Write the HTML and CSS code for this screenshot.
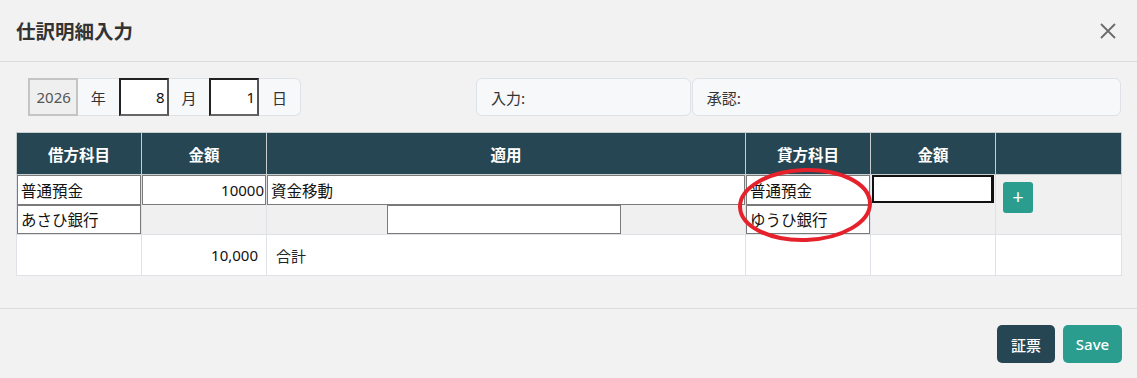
FILE: index.html
```html
<!DOCTYPE html>
<html lang="ja">
<head>
<meta charset="utf-8">
<link rel="stylesheet" href="styles.css">
</head>
<body>
<div class="modal">
  <header class="modal-header">
    <h1 class="modal-title">仕訳明細入力</h1>
    <button class="close-btn" aria-label="close">
      <svg width="18" height="18" viewBox="0 0 18 18"><path d="M2 2 L16 16 M16 2 L2 16" stroke="#6c6c6c" stroke-width="1.8" fill="none"/></svg>
    </button>
  </header>
  <div class="modal-body">
    <div class="top-row">
      <div class="date-group">
        <span class="year-box">2026</span>
        <span class="unit">年</span>
        <span class="num-input">8</span>
        <span class="unit">月</span>
        <span class="num-input">1</span>
        <span class="unit last">日</span>
      </div>
      <div class="info-box input-box">入力:</div>
      <div class="info-box approve-box">承認:</div>
    </div>
    <div class="table-wrap">
      <table class="journal">
        <colgroup>
          <col class="c-narrow"><col class="c-narrow"><col class="c-wide"><col class="c-narrow"><col class="c-narrow"><col class="c-last">
        </colgroup>
        <thead>
          <tr><th>借方科目</th><th>金額</th><th>適用</th><th>貸方科目</th><th>金額</th><th></th></tr>
        </thead>
        <tbody>
          <tr class="entry">
            <td><div class="field">普通預金</div><div class="field">あさひ銀行</div></td>
            <td><div class="field right">10000</div></td>
            <td><div class="field">資金移動</div><div class="field-row"><div class="field memo"></div></div></td>
            <td><div class="field">普通預金</div><div class="field">ゆうひ銀行</div></td>
            <td><div class="field focus"></div></td>
            <td class="btn-cell"><button class="add-btn">+</button></td>
          </tr>
          <tr class="total">
            <td></td>
            <td class="amount">10,000</td>
            <td class="label">合計</td>
            <td></td><td></td><td></td>
          </tr>
        </tbody>
      </table>
      <svg class="mark" width="150" height="90" viewBox="0 0 150 90"><ellipse cx="75" cy="45" rx="65" ry="35" transform="rotate(-2 75 45)" fill="none" stroke="#e5212b" stroke-width="4"/></svg>
    </div>
  </div>
  <footer class="modal-footer">
    <button class="btn btn-dark">証票</button>
    <button class="btn btn-teal">Save</button>
  </footer>
</div>
</body>
</html>
```
FILE: styles.css
```css
* { box-sizing: border-box; }
html, body { margin: 0; padding: 0; }
body {
  background: #f2f2f2;
  font-family: "Noto Sans", "Noto Sans CJK JP", sans-serif;
  font-size: 15px;
  color: #212529;
  width: 1137px;
  height: 378px;
  overflow: hidden;
}
.modal { display: flex; flex-direction: column; height: 378px; }
.modal-header {
  height: 62px;
  flex: none;
  border-bottom: 1px solid #dcdcdc;
  display: flex;
  align-items: center;
  justify-content: space-between;
  padding: 0 16px 0 16px;
}
.modal-title {
  margin: 0;
  font-size: 19.5px;
  font-weight: 700;
  color: #333;
  font-family: "Noto Sans CJK JP", sans-serif;
}
.close-btn {
  border: none; background: none; padding: 0; margin-right: 4px;
  width: 18px; height: 18px; display: flex;
}
.modal-body { padding: 16px 16px 0 16px; flex: 1; }
.top-row { display: flex; align-items: stretch; height: 38px; }
.date-group {
  display: flex;
  margin-left: 12px;
  width: 273px;
  border: 1px solid #dee2e6;
  border-left: none;
  border-radius: 0 6px 6px 0;
  background: #f7f8fa;
}
.date-group > span { display: flex; align-items: center; }
.year-box {
  width: 50px; margin: -1px 0;
  background: #efefef;
  border: 2px solid #c4c4c4;
  justify-content: flex-end;
  padding-right: 5px;
  color: #555;
}
.unit { width: 41px; justify-content: center; font-family: "Noto Sans CJK JP", sans-serif; color: #333; }
.num-input {
  width: 50px; margin: -1px 0;
  background: #fff;
  border: 2px solid #222;
  border-right-color: #555; border-bottom-color: #666;
  justify-content: flex-end;
  padding-right: 2px;
  color: #111;
}
.info-box {
  display: flex; align-items: center;
  background: #f7f8fa;
  border: 1px solid #dee2e6;
  border-radius: 6px;
  padding-left: 14px;
  color: #333;
  font-family: "Noto Sans CJK JP", sans-serif;
}
.input-box { margin-left: 175px; width: 215px; }
.approve-box { margin-left: 1px; width: 430px; }
.table-wrap { position: relative; margin-top: 16px; }
.journal {
  border-collapse: collapse;
  width: 1105px;
  table-layout: fixed;
  font-family: "Noto Sans", "Noto Sans CJK JP", sans-serif;
}
.c-narrow { width: 125px; }
.c-wide { width: 479px; }
.c-last { width: 126px; }
.journal th {
  background: #264653;
  color: #fff;
  height: 42px;
  border: 1px solid #c8cdd0;
  font-weight: 700;
  font-size: 15.5px;
  font-family: "Noto Sans CJK JP", sans-serif;
}
.journal td { border: 1px solid #dee2e6; padding: 0; vertical-align: top; }
.entry td { background: #f0f0f0; height: 59px; }
.field {
  height: 29.5px;
  background: #fff;
  border: 1px solid #7a7a7a;
  display: flex; align-items: center;
  padding: 0 3px;
  color: #111;
  font-size: 15.5px;
  font-family: "Noto Sans CJK JP", sans-serif;
}
.field.right { justify-content: flex-end; font-family: "Noto Sans", sans-serif; font-size: 15px; padding-right: 1px; }
.field-row { display: flex; justify-content: flex-start; padding-left: 120px; }
.field.memo { width: 234px; }
.field.focus { height: 28px; margin: 0 1px 0 1px; border: 2px solid #111; border-right-width: 3px; }
.btn-cell { padding: 7px 0 0 7px !important; }
.add-btn {
  width: 30px; height: 31px;
  background: #2a9d8f; color: #fff;
  border: none; border-radius: 3px;
  font-size: 20px; line-height: 1; padding: 0 0 2px 0;
  font-family: "Noto Sans", sans-serif;
}
.total td { background: #fff; height: 41px; vertical-align: middle; }
.total .amount { text-align: right; padding-right: 8px; color: #111; }
.total .label { padding-left: 9px; font-family: "Noto Sans CJK JP", sans-serif; }
.mark { position: absolute; left: 714px; top: 28px; pointer-events: none; }
.modal-footer {
  height: 70px;
  flex: none;
  border-top: 1px solid #dcdcdc;
  display: flex;
  justify-content: flex-end;
  align-items: flex-start;
  padding: 16px 15px 0 0;
  gap: 8px;
}
.btn {
  height: 38px;
  border: none;
  border-radius: 5px;
  color: #fff;
  font-size: 15px;
  font-family: "Noto Sans CJK JP", sans-serif;
  font-weight: 500;
}
.btn-dark { background: #264653; width: 58px; }
.btn-teal { background: #2a9d8f; width: 59px; font-family: "Noto Sans", sans-serif; }
```
